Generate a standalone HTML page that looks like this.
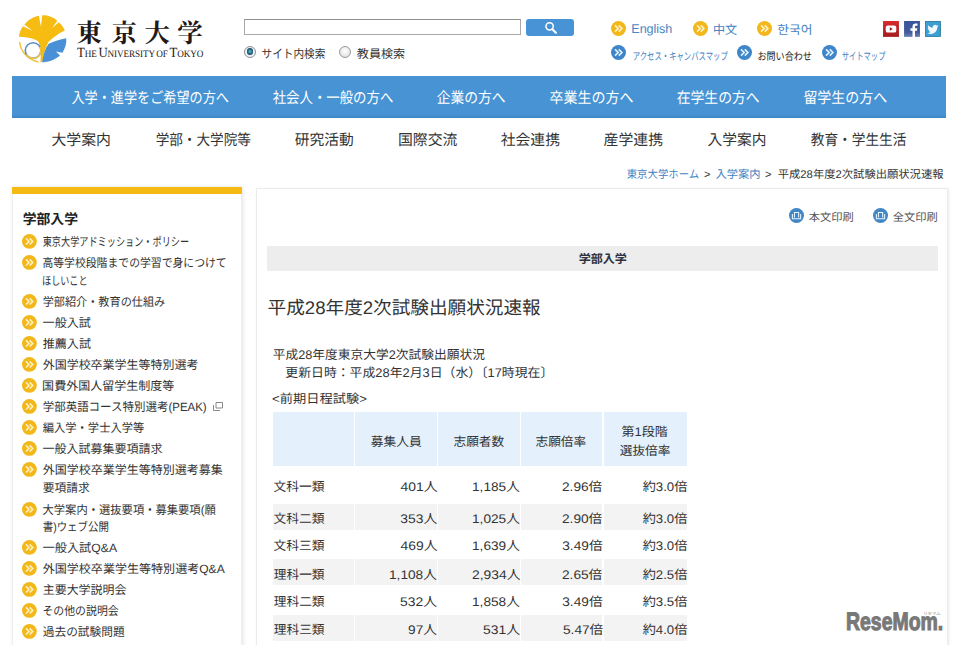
<!DOCTYPE html>
<html lang="ja">
<head>
<meta charset="utf-8">
<title>平成28年度2次試験出願状況速報 | 東京大学</title>
<style>
html,body{margin:0;padding:0;background:#fff}
body{position:relative;width:956px;height:645px;overflow:hidden;text-rendering:geometricPrecision;font-family:"Liberation Sans",sans-serif;color:#333}
ul,ol,li,h1,h2,p,form,table,thead,tbody,tr,th,td{margin:0;padding:0;list-style:none;font-weight:normal;border:0}
a{color:inherit;text-decoration:none}
svg.t,svg.ic{position:absolute;overflow:visible}
svg.t{color:#333;fill:currentColor;stroke:none}
svg.t text{font-family:"Liberation Sans","Noto Sans CJK JP",sans-serif;fill:currentColor;stroke:none}
svg.t text.b{font-weight:bold}
svg.t text.sc{font-family:"Liberation Sans","Noto Sans CJK SC",sans-serif}
svg.t text.kr{font-family:"Liberation Sans","Noto Sans CJK KR","NanumGothic",sans-serif}
.logo .jp svg.t text{font-family:"Liberation Serif","Noto Serif CJK SC",serif;font-weight:bold}
#hd{position:absolute;left:0;top:0;width:956px;height:76px}
.logo .en{position:absolute;left:76.8px;top:46.9px;white-space:nowrap;transform-origin:0 0;transform:scaleX(.915);font-family:"Liberation Serif",serif;font-size:10px;line-height:14px;color:#231815;letter-spacing:-0.12px;word-spacing:-0.5px}
.logo .en b{font-weight:normal;font-size:14px}
.search .q{position:absolute;left:244px;top:19px;width:277px;height:16px;box-sizing:border-box;border:1px solid #a9a9a9;border-top-color:#8f8f8f;background:#fff;padding:0;margin:0;border-radius:0;outline:0}
.search .go{position:absolute;left:526px;top:19.2px;width:47.8px;height:16.5px;box-sizing:border-box;border:0;border-radius:3px;background:#4893d6;padding:0;margin:0}
.search .go svg{position:absolute;left:17.6px;top:1.4px}
.rd{position:absolute;width:12px;height:12px}
.radio{position:absolute;left:0;top:0;width:12px;height:12px;box-sizing:border-box;border:1px solid #9a9a9a;border-radius:50%;background:radial-gradient(circle at 50% 40%,#fff 0,#e8e8e8 60%,#d4d4d4 100%)}
.radio.on:after{content:"";position:absolute;left:1.7px;top:1.7px;width:6.6px;height:6.6px;border-radius:50%;background:radial-gradient(circle at 50% 50%,#6fc6d6 0,#2f7f98 35%,#163f58 75%)}
.radio.on{border-color:#8a909a;background:#eef3f8}
.eng{position:absolute;left:631.3px;top:21.3px;font-size:12.6px;line-height:16px;color:#4a86c2;letter-spacing:-0.05px}
#n1{position:absolute;left:12px;top:76px;width:934px;height:41.8px;background:#4793d4;box-shadow:inset 0 -3px 2px -1px rgba(0,40,90,.10)}
#n2{position:absolute;left:0;top:118px;width:956px;height:42px}
.crumb{position:absolute;left:0;top:0}
#side{position:absolute;left:12px;top:187px;width:230px;height:470px;background:#fff;box-shadow:inset 0 0 0 1px #eee,1px 0 4px rgba(0,0,0,.11)}
#side:before{content:"";position:absolute;left:0;top:0;width:230px;height:6.8px;background:#f5bb12}
#main{position:absolute;left:256px;top:188px;width:691.6px;height:470px;background:#fff;box-shadow:inset 0 0 0 1px #ebebeb,1px 1px 3px rgba(0,0,0,.09)}
#main ul.print,#main p,#main h1{position:absolute;left:0;top:0}
#main p.cat{left:11px;top:57.5px;width:671px;height:25.1px;background:#ededed}
.tb{position:absolute;left:16.7px;top:224px;display:block}
.tb thead,.tb tbody{display:block}
.tb tr{display:block;position:absolute;left:0;width:414px}
.tb thead tr{top:0;height:53.7px}
.tb th,.tb td{display:block;position:absolute;top:0;height:100%}
.tb thead th{background:#e4f0fc}
.tb tr.g th,.tb tr.g td{background:#f3f3f3}
.wm{position:absolute;left:845.5px;top:608.3px;width:100px;height:28px;color:#787878;font-weight:bold;font-size:25.2px;line-height:28px;white-space:nowrap;-webkit-text-stroke:1.1px #787878}
.wm span{display:inline-block;transform-origin:0 50%;transform:scaleX(.772);letter-spacing:0}
.wm svg.t text{font-weight:normal}
</style>
</head>
<body>
<header id="hd">
<a class="logo" href="#">
<svg class="ic" style="left:10px;top:8px" width="70" height="62" viewBox="0 0 728 645" aria-hidden="true">
<path d="M93 300C97 255 112 220 135 190L235 240 150 172C185 125 240 92 300 80L322 195 335 76C390 72 445 92 492 132L438 208 507 147C540 175 560 205 570 235 500 270 440 310 400 355 370 410 350 480 338 562L316 564C325 470 322 400 295 350 262 322 190 304 93 300z" fill="#f6bc12"/>
<path d="M99 352A245 245 0 0 0 298 563" fill="none" stroke="#f2c23e" stroke-width="15"/>
<circle cx="240" cy="442" r="81" fill="none" stroke="#5a8fc6" stroke-width="17"/>
<path d="M312 405A81 81 0 0 1 170 483" fill="none" stroke="#f2c23e" stroke-width="17"/>
<path d="M335 566C345 490 365 420 402 372 460 345 520 325 585 315 590 370 575 420 545 465L478 452 520 495C470 540 400 562 335 566z" fill="#4a90d6"/>
</svg>
<span class="jp">
<svg class="t" style="left:76.1px;top:18.74px;color:#231815" width="25.9" height="30.6"><text x="0.4" y="23.46" font-size="25.5">東</text></svg>
<svg class="t" style="left:111px;top:18.74px;color:#231815" width="25" height="30.6"><text x="0.44" y="23.46" font-size="25.5">京</text></svg>
<svg class="t" style="left:143.7px;top:18.74px;color:#231815" width="26.1" height="30.6"><text x="0.39" y="23.46" font-size="25.5">大</text></svg>
<svg class="t" style="left:176.6px;top:18.74px;color:#231815" width="27" height="30.6"><text x="0.31" y="23.46" font-size="25.5">学</text></svg>
</span>
<span class="en"><b>T</b>HE <b>U</b>NIVERSITY OF <b>T</b>OKYO</span>
</a>
<form class="search" action="#">
<input type="text" class="q" aria-label="検索">
<button type="button" class="go" aria-label="検索"><svg width="13.6" height="13.6" viewBox="0 0 16 16"><circle cx="6.6" cy="6.3" r="4.3" fill="none" stroke="#fff" stroke-width="1.9"/><path d="M9.8 9.6 14 13.8" stroke="#fff" stroke-width="2.4" stroke-linecap="round"/></svg></button>
<label class="rd" style="left:244px;top:45.8px"><span class="radio on"></span></label>
<svg class="t" style="left:261px;top:46.52px" width="64.9" height="14.4"><text x="0.55" y="11.04" font-size="12" textLength="63.8" lengthAdjust="spacingAndGlyphs">サイト内検索</text></svg>
<label class="rd" style="left:339px;top:45.7px"><span class="radio"></span></label>
<svg class="t" style="left:356.3px;top:46.52px" width="49.7" height="14.4"><text x="0.82" y="11.04" font-size="12" textLength="48.4" lengthAdjust="spacingAndGlyphs">教員検索</text></svg>
</form>
<ul class="lang">
<li><a href="#"><svg class="ic" style="left:611px;top:21.1px" width="15" height="15" viewBox="0 0 16 16" aria-hidden="true"><circle cx="8" cy="8" r="8" fill="#f3b71a"/><path d="M4.3 4.7 7.6 8 4.3 11.3M8.3 4.7 11.6 8 8.3 11.3" fill="none" stroke="#fff3cc" stroke-width="1.75"/></svg><span class="eng">English</span></a></li>
<li><a href="#"><svg class="ic" style="left:693.1px;top:21.1px" width="15" height="15" viewBox="0 0 16 16" aria-hidden="true"><circle cx="8" cy="8" r="8" fill="#f3b71a"/><path d="M4.3 4.7 7.6 8 4.3 11.3M8.3 4.7 11.6 8 8.3 11.3" fill="none" stroke="#fff3cc" stroke-width="1.75"/></svg><svg class="t" style="left:712.6px;top:22.91px;color:#4482c0" width="24.7" height="14.64"><text class="sc" x="0" y="11.22" font-size="12.2" textLength="24.2" lengthAdjust="spacingAndGlyphs">中文</text></svg></a></li>
<li><a href="#"><svg class="ic" style="left:757.2px;top:21.1px" width="15" height="15" viewBox="0 0 16 16" aria-hidden="true"><circle cx="8" cy="8" r="8" fill="#f3b71a"/><path d="M4.3 4.7 7.6 8 4.3 11.3M8.3 4.7 11.6 8 8.3 11.3" fill="none" stroke="#fff3cc" stroke-width="1.75"/></svg><svg class="t" style="left:776.5px;top:23.11px;color:#4482c0" width="35.7" height="14.64"><text class="kr" x="0.29" y="11.22" font-size="12.2" textLength="35.2" lengthAdjust="spacingAndGlyphs">한국어</text></svg></a></li>
</ul>
<ul class="util">
<li><a href="#"><svg class="ic" style="left:611px;top:44.9px" width="15" height="15" viewBox="0 0 16 16" aria-hidden="true"><circle cx="8" cy="8" r="8" fill="#3f85c9"/><path d="M4.3 4.7 7.6 8 4.3 11.3M8.3 4.7 11.6 8 8.3 11.3" fill="none" stroke="#e3f2ff" stroke-width="1.75"/></svg><svg class="t" style="left:631.6px;top:49.98px;color:#4482c0" width="96.2" height="12.72"><text x="0.74" y="9.75" font-size="10.6" textLength="95" lengthAdjust="spacingAndGlyphs">アクセス・キャンパスマップ</text></svg></a></li>
<li><a href="#"><svg class="ic" style="left:736.8px;top:44.9px" width="15" height="15" viewBox="0 0 16 16" aria-hidden="true"><circle cx="8" cy="8" r="8" fill="#3f85c9"/><path d="M4.3 4.7 7.6 8 4.3 11.3M8.3 4.7 11.6 8 8.3 11.3" fill="none" stroke="#e3f2ff" stroke-width="1.75"/></svg><svg class="t" style="left:756.8px;top:49.98px;color:#1a1a1a" width="55.4" height="12.72"><text x="0.42" y="9.75" font-size="10.6" textLength="54.5" lengthAdjust="spacingAndGlyphs">お問い合わせ</text></svg></a></li>
<li><a href="#"><svg class="ic" style="left:821.9px;top:44.9px" width="15" height="15" viewBox="0 0 16 16" aria-hidden="true"><circle cx="8" cy="8" r="8" fill="#3f85c9"/><path d="M4.3 4.7 7.6 8 4.3 11.3M8.3 4.7 11.6 8 8.3 11.3" fill="none" stroke="#e3f2ff" stroke-width="1.75"/></svg><svg class="t" style="left:841px;top:49.98px;color:#4482c0" width="44.8" height="12.72"><text x="0.66" y="9.75" font-size="10.6" textLength="43.8" lengthAdjust="spacingAndGlyphs">サイトマップ</text></svg></a></li>
</ul>
<ul class="sns">
<li><a href="#" aria-label="YouTube"><svg class="ic" style="left:882.9px;top:20.8px" width="16" height="15.9" viewBox="0 0 16 16"><defs><linearGradient id="yg" x1="0" y1="0" x2="0" y2="1"><stop offset="0" stop-color="#d92a2c"/><stop offset="1" stop-color="#a31c1f"/></linearGradient></defs><rect width="16" height="16" fill="url(#yg)"/><rect x="2.7" y="4.5" width="10.6" height="7.2" rx="2" fill="#fff"/><path d="M6.800 6.400v3.400l3-1.700z" fill="#8e1b1d"/></svg></a></li>
<li><a href="#" aria-label="Facebook"><svg class="ic" style="left:904px;top:20.8px" width="16" height="15.9" viewBox="0 0 16 16"><defs><linearGradient id="fg" x1="0" y1="0" x2="0" y2="1"><stop offset="0" stop-color="#3a559c"/><stop offset=".7" stop-color="#40599b"/><stop offset="1" stop-color="#6b82b3"/></linearGradient></defs><rect width="16" height="16" fill="url(#fg)"/><path d="M11 16V9.800h2l.3-2.400H11V5.900c0-.7.200-1.200 1.200-1.200h1.300V2.600c-.2 0-1-.1-1.900-.1-1.900 0-3.100 1.100-3.100 3.200v1.700H6.400v2.400h2.100V16z" fill="#fff"/></svg></a></li>
<li><a href="#" aria-label="Twitter"><svg class="ic" style="left:924.9px;top:20.8px" width="16" height="15.9" viewBox="0 0 16 16"><rect x=".4" y=".4" width="15.200" height="15.200" fill="#3c9fd4" stroke="#22759c" stroke-width=".8"/><path d="M13.400 4.900c-.4.200-.9.300-1.300.4.500-.3.800-.7 1-1.300-.4.300-.9.500-1.500.6a2.300 2.300 0 0 0-3.900 2.100C5.900 6.600 4.200 5.700 3.100 4.300c-.6 1-.3 2.400.700 3.100-.4 0-.7-.1-1-.3 0 1.100.8 2.100 1.800 2.300-.3.100-.7.100-1 0 .3.900 1.100 1.600 2.100 1.600-1 .8-2.200 1.100-3.400 1 1 .7 2.300 1 3.500 1 4.300 0 6.700-3.600 6.500-6.900.4-.3.800-.7 1.100-1.200z" fill="#f4fbff"/></svg></a></li>
</ul>
</header>
<nav id="n1"><ul>
<li><a href="#"><svg class="t" style="left:59.3px;top:12.79px;color:#fff" width="158.7" height="18.24"><text x="0.42" y="13.98" font-size="15.2" textLength="157.5" lengthAdjust="spacingAndGlyphs">入学・進学をご希望の方へ</text></svg></a></li>
<li><a href="#"><svg class="t" style="left:260.2px;top:12.79px;color:#fff" width="122" height="18.24"><text x="0.73" y="13.98" font-size="15.2" textLength="120.6" lengthAdjust="spacingAndGlyphs">社会人・一般の方へ</text></svg></a></li>
<li><a href="#"><svg class="t" style="left:424.1px;top:12.79px;color:#fff" width="70.1" height="18.24"><text x="0.74" y="13.98" font-size="15.2" textLength="68.8" lengthAdjust="spacingAndGlyphs">企業の方へ</text></svg></a></li>
<li><a href="#"><svg class="t" style="left:536.6px;top:12.79px;color:#fff" width="85.1" height="18.24"><text x="0.62" y="13.98" font-size="15.2" textLength="83.8" lengthAdjust="spacingAndGlyphs">卒業生の方へ</text></svg></a></li>
<li><a href="#"><svg class="t" style="left:664.2px;top:12.79px;color:#fff" width="84.3" height="18.24"><text x="0.71" y="13.98" font-size="15.2" textLength="83" lengthAdjust="spacingAndGlyphs">在学生の方へ</text></svg></a></li>
<li><a href="#"><svg class="t" style="left:790.9px;top:12.79px;color:#fff" width="84.8" height="18.24"><text x="0.39" y="13.98" font-size="15.2" textLength="83.8" lengthAdjust="spacingAndGlyphs">留学生の方へ</text></svg></a></li>
</ul></nav>
<nav id="n2"><ul>
<li><a href="#"><svg class="t" style="left:51.2px;top:12.9px" width="60.3" height="18"><text x="0.4" y="13.8" font-size="15" textLength="59.5" lengthAdjust="spacingAndGlyphs">大学案内</text></svg></a></li>
<li><a href="#"><svg class="t" style="left:154.7px;top:12.9px" width="96.4" height="18"><text x="0.63" y="13.8" font-size="15" textLength="95.3" lengthAdjust="spacingAndGlyphs">学部・大学院等</text></svg></a></li>
<li><a href="#"><svg class="t" style="left:294.3px;top:12.9px" width="60.2" height="18"><text x="0.83" y="13.8" font-size="15" textLength="59" lengthAdjust="spacingAndGlyphs">研究活動</text></svg></a></li>
<li><a href="#"><svg class="t" style="left:397.7px;top:12.9px" width="60" height="18"><text x="0" y="13.8" font-size="15" textLength="59.5" lengthAdjust="spacingAndGlyphs">国際交流</text></svg></a></li>
<li><a href="#"><svg class="t" style="left:500.4px;top:12.9px" width="60.5" height="18"><text x="0.73" y="13.8" font-size="15" textLength="59.3" lengthAdjust="spacingAndGlyphs">社会連携</text></svg></a></li>
<li><a href="#"><svg class="t" style="left:603.4px;top:12.9px" width="60.5" height="18"><text x="0.62" y="13.8" font-size="15" textLength="59.4" lengthAdjust="spacingAndGlyphs">産学連携</text></svg></a></li>
<li><a href="#"><svg class="t" style="left:707px;top:12.9px" width="59.6" height="18"><text x="0.43" y="13.8" font-size="15" textLength="59" lengthAdjust="spacingAndGlyphs">入学案内</text></svg></a></li>
<li><a href="#"><svg class="t" style="left:810.1px;top:12.9px" width="97.1" height="18"><text x="0.77" y="13.8" font-size="15" textLength="95.7" lengthAdjust="spacingAndGlyphs">教育・学生生活</text></svg></a></li>
</ul></nav>
<ol class="crumb">
<li><a href="#"><svg class="t" style="left:626.1px;top:168.01px;color:#4482c0" width="73.7" height="13.32"><text x="0.73" y="10.21" font-size="11.1" textLength="72.5" lengthAdjust="spacingAndGlyphs">東京大学ホーム</text></svg></a></li>
<li><svg class="t" style="left:702.8px;top:168.01px" width="8.500" height="13.32"><text x="1" y="10.21" font-size="11.1">&gt;</text></svg><a href="#"><svg class="t" style="left:715px;top:168.01px;color:#4482c0" width="45.6" height="13.32"><text x="0.57" y="10.21" font-size="11.1" textLength="45" lengthAdjust="spacingAndGlyphs">入学案内</text></svg></a></li>
<li><svg class="t" style="left:764.2px;top:168.01px" width="8.500" height="13.32"><text x="1" y="10.21" font-size="11.1">&gt;</text></svg><svg class="t" style="left:776.8px;top:168.01px" width="167" height="13.32"><text x="0.72" y="10.21" font-size="11.1" textLength="165.8" lengthAdjust="spacingAndGlyphs">平成28年度2次試験出願状況速報</text></svg></li>
</ol>
<aside id="side">
<h2><svg class="t" style="left:9.8px;top:24.44px;color:#222" width="56.6" height="16.8"><text class="b" x="0.66" y="12.88" font-size="14" textLength="55.3" lengthAdjust="spacingAndGlyphs">学部入学</text></svg></h2>
<ul>
<li><a href="#"><svg class="ic" style="left:10px;top:47.1px" width="14.8" height="14.8" viewBox="0 0 16 16" aria-hidden="true"><circle cx="8" cy="8" r="8" fill="#f2b819"/><path d="M4.3 4.7 7.6 8 4.3 11.3M8.3 4.7 11.6 8 8.3 11.3" fill="none" stroke="#fff1c2" stroke-width="1.7"/></svg><svg class="t" style="left:29.6px;top:48.02px" width="147.7" height="14.4"><text x="0.71" y="11.04" font-size="12" textLength="146.4" lengthAdjust="spacingAndGlyphs">東京大学アドミッション・ポリシー</text></svg></a></li>
<li><a href="#"><svg class="ic" style="left:10px;top:68.2px" width="14.8" height="14.8" viewBox="0 0 16 16" aria-hidden="true"><circle cx="8" cy="8" r="8" fill="#f2b819"/><path d="M4.3 4.7 7.6 8 4.3 11.3M8.3 4.7 11.6 8 8.3 11.3" fill="none" stroke="#fff1c2" stroke-width="1.7"/></svg><svg class="t" style="left:29.6px;top:69.32px" width="185.3" height="14.4"><text x="0.41" y="11.04" font-size="12" textLength="184.3" lengthAdjust="spacingAndGlyphs">高等学校段階までの学習で身につけて</text></svg><svg class="t" style="left:29.6px;top:87.32px" width="46" height="14.4"><text x="0.05" y="11.04" font-size="12" textLength="45.5" lengthAdjust="spacingAndGlyphs">ほしいこと</text></svg></a></li>
<li><a href="#"><svg class="ic" style="left:10px;top:107px" width="14.8" height="14.8" viewBox="0 0 16 16" aria-hidden="true"><circle cx="8" cy="8" r="8" fill="#f2b819"/><path d="M4.3 4.7 7.6 8 4.3 11.3M8.3 4.7 11.6 8 8.3 11.3" fill="none" stroke="#fff1c2" stroke-width="1.7"/></svg><svg class="t" style="left:29.6px;top:107.92px" width="123.8" height="14.4"><text x="0.7" y="11.04" font-size="12" textLength="122.5" lengthAdjust="spacingAndGlyphs">学部紹介・教育の仕組み</text></svg></a></li>
<li><a href="#"><svg class="ic" style="left:10px;top:128.3px" width="14.8" height="14.8" viewBox="0 0 16 16" aria-hidden="true"><circle cx="8" cy="8" r="8" fill="#f2b819"/><path d="M4.3 4.7 7.6 8 4.3 11.3M8.3 4.7 11.6 8 8.3 11.3" fill="none" stroke="#fff1c2" stroke-width="1.7"/></svg><svg class="t" style="left:29.6px;top:129.32px" width="49.7" height="14.4"><text x="0.54" y="11.04" font-size="12" textLength="48.4" lengthAdjust="spacingAndGlyphs">一般入試</text></svg></a></li>
<li><a href="#"><svg class="ic" style="left:10px;top:149.1px" width="14.8" height="14.8" viewBox="0 0 16 16" aria-hidden="true"><circle cx="8" cy="8" r="8" fill="#f2b819"/><path d="M4.3 4.7 7.6 8 4.3 11.3M8.3 4.7 11.6 8 8.3 11.3" fill="none" stroke="#fff1c2" stroke-width="1.7"/></svg><svg class="t" style="left:29.6px;top:150.02px" width="49.7" height="14.4"><text x="0.76" y="11.04" font-size="12" textLength="48.2" lengthAdjust="spacingAndGlyphs">推薦入試</text></svg></a></li>
<li><a href="#"><svg class="ic" style="left:10px;top:169.9px" width="14.8" height="14.8" viewBox="0 0 16 16" aria-hidden="true"><circle cx="8" cy="8" r="8" fill="#f2b819"/><path d="M4.3 4.7 7.6 8 4.3 11.3M8.3 4.7 11.6 8 8.3 11.3" fill="none" stroke="#fff1c2" stroke-width="1.7"/></svg><svg class="t" style="left:29.6px;top:170.82px" width="157.2" height="14.4"><text x="0.7" y="11.04" font-size="12" textLength="155.8" lengthAdjust="spacingAndGlyphs">外国学校卒業学生等特別選考</text></svg></a></li>
<li><a href="#"><svg class="ic" style="left:10px;top:191.1px" width="14.8" height="14.8" viewBox="0 0 16 16" aria-hidden="true"><circle cx="8" cy="8" r="8" fill="#f2b819"/><path d="M4.3 4.7 7.6 8 4.3 11.3M8.3 4.7 11.6 8 8.3 11.3" fill="none" stroke="#fff1c2" stroke-width="1.7"/></svg><svg class="t" style="left:29.6px;top:192.12px" width="133.1" height="14.4"><text x="0.12" y="11.04" font-size="12" textLength="132.3" lengthAdjust="spacingAndGlyphs">国費外国人留学生制度等</text></svg></a></li>
<li><a href="#"><svg class="ic" style="left:10px;top:212px" width="14.8" height="14.8" viewBox="0 0 16 16" aria-hidden="true"><circle cx="8" cy="8" r="8" fill="#f2b819"/><path d="M4.3 4.7 7.6 8 4.3 11.3M8.3 4.7 11.6 8 8.3 11.3" fill="none" stroke="#fff1c2" stroke-width="1.7"/></svg><svg class="t" style="left:29.6px;top:212.92px" width="165.2" height="14.4"><text x="0.7" y="11.04" font-size="12" textLength="164" lengthAdjust="spacingAndGlyphs">学部英語コース特別選考(PEAK)</text></svg><svg class="ic" style="left:200.6px;top:215.2px" width="10" height="9" viewBox="0 0 10 9" aria-hidden="true"><path d="M3 .5h6.500v5.500H3zM.5 3v5.500h6.500" fill="none" stroke="#888" stroke-width="1"/></svg></a></li>
<li><a href="#"><svg class="ic" style="left:10px;top:232.9px" width="14.8" height="14.8" viewBox="0 0 16 16" aria-hidden="true"><circle cx="8" cy="8" r="8" fill="#f2b819"/><path d="M4.3 4.7 7.6 8 4.3 11.3M8.3 4.7 11.6 8 8.3 11.3" fill="none" stroke="#fff1c2" stroke-width="1.7"/></svg><svg class="t" style="left:29.6px;top:233.82px" width="103" height="14.4"><text x="0.77" y="11.04" font-size="12" textLength="101.5" lengthAdjust="spacingAndGlyphs">編入学・学士入学等</text></svg></a></li>
<li><a href="#"><svg class="ic" style="left:10px;top:253.9px" width="14.8" height="14.8" viewBox="0 0 16 16" aria-hidden="true"><circle cx="8" cy="8" r="8" fill="#f2b819"/><path d="M4.3 4.7 7.6 8 4.3 11.3M8.3 4.7 11.6 8 8.3 11.3" fill="none" stroke="#fff1c2" stroke-width="1.7"/></svg><svg class="t" style="left:29.6px;top:254.82px" width="121.3" height="14.4"><text x="0.54" y="11.04" font-size="12" textLength="120.1" lengthAdjust="spacingAndGlyphs">一般入試募集要項請求</text></svg></a></li>
<li><a href="#"><svg class="ic" style="left:10px;top:274.8px" width="14.8" height="14.8" viewBox="0 0 16 16" aria-hidden="true"><circle cx="8" cy="8" r="8" fill="#f2b819"/><path d="M4.3 4.7 7.6 8 4.3 11.3M8.3 4.7 11.6 8 8.3 11.3" fill="none" stroke="#fff1c2" stroke-width="1.7"/></svg><svg class="t" style="left:29.6px;top:275.72px" width="181.6" height="14.4"><text x="0.7" y="11.04" font-size="12" textLength="180.1" lengthAdjust="spacingAndGlyphs">外国学校卒業学生等特別選考募集</text></svg><svg class="t" style="left:29.6px;top:294.02px" width="48.4" height="14.4"><text x="0.71" y="11.04" font-size="12" textLength="47" lengthAdjust="spacingAndGlyphs">要項請求</text></svg></a></li>
<li><a href="#"><svg class="ic" style="left:10px;top:314.6px" width="14.8" height="14.8" viewBox="0 0 16 16" aria-hidden="true"><circle cx="8" cy="8" r="8" fill="#f2b819"/><path d="M4.3 4.7 7.6 8 4.3 11.3M8.3 4.7 11.6 8 8.3 11.3" fill="none" stroke="#fff1c2" stroke-width="1.7"/></svg><svg class="t" style="left:29.6px;top:315.72px" width="174.4" height="14.4"><text x="0.52" y="11.04" font-size="12" textLength="173.2" lengthAdjust="spacingAndGlyphs">大学案内・選抜要項・募集要項(願</text></svg><svg class="t" style="left:29.6px;top:333.42px" width="67.4" height="14.4"><text x="0.7" y="11.04" font-size="12" textLength="66.3" lengthAdjust="spacingAndGlyphs">書)ウェブ公開</text></svg></a></li>
<li><a href="#"><svg class="ic" style="left:10px;top:353px" width="14.8" height="14.8" viewBox="0 0 16 16" aria-hidden="true"><circle cx="8" cy="8" r="8" fill="#f2b819"/><path d="M4.3 4.7 7.6 8 4.3 11.3M8.3 4.7 11.6 8 8.3 11.3" fill="none" stroke="#fff1c2" stroke-width="1.7"/></svg><svg class="t" style="left:29.6px;top:353.92px" width="75.6" height="14.4"><text x="0.54" y="11.04" font-size="12" textLength="74.5" lengthAdjust="spacingAndGlyphs">一般入試Q&amp;A</text></svg></a></li>
<li><a href="#"><svg class="ic" style="left:10px;top:374.1px" width="14.8" height="14.8" viewBox="0 0 16 16" aria-hidden="true"><circle cx="8" cy="8" r="8" fill="#f2b819"/><path d="M4.3 4.7 7.6 8 4.3 11.3M8.3 4.7 11.6 8 8.3 11.3" fill="none" stroke="#fff1c2" stroke-width="1.7"/></svg><svg class="t" style="left:29.6px;top:375.02px" width="183.3" height="14.4"><text x="0.7" y="11.04" font-size="12" textLength="182" lengthAdjust="spacingAndGlyphs">外国学校卒業学生等特別選考Q&amp;A</text></svg></a></li>
<li><a href="#"><svg class="ic" style="left:10px;top:395.2px" width="14.8" height="14.8" viewBox="0 0 16 16" aria-hidden="true"><circle cx="8" cy="8" r="8" fill="#f2b819"/><path d="M4.3 4.7 7.6 8 4.3 11.3M8.3 4.7 11.6 8 8.3 11.3" fill="none" stroke="#fff1c2" stroke-width="1.7"/></svg><svg class="t" style="left:29.6px;top:396.12px" width="85.3" height="14.4"><text x="0.7" y="11.04" font-size="12" textLength="83.8" lengthAdjust="spacingAndGlyphs">主要大学説明会</text></svg></a></li>
<li><a href="#"><svg class="ic" style="left:10px;top:416.3px" width="14.8" height="14.8" viewBox="0 0 16 16" aria-hidden="true"><circle cx="8" cy="8" r="8" fill="#f2b819"/><path d="M4.3 4.7 7.6 8 4.3 11.3M8.3 4.7 11.6 8 8.3 11.3" fill="none" stroke="#fff1c2" stroke-width="1.7"/></svg><svg class="t" style="left:29.6px;top:417.22px" width="77.4" height="14.4"><text x="0.47" y="11.04" font-size="12" textLength="76.2" lengthAdjust="spacingAndGlyphs">その他の説明会</text></svg></a></li>
<li><a href="#"><svg class="ic" style="left:10px;top:437.3px" width="14.8" height="14.8" viewBox="0 0 16 16" aria-hidden="true"><circle cx="8" cy="8" r="8" fill="#f2b819"/><path d="M4.3 4.7 7.6 8 4.3 11.3M8.3 4.7 11.6 8 8.3 11.3" fill="none" stroke="#fff1c2" stroke-width="1.7"/></svg><svg class="t" style="left:29.6px;top:438.22px" width="83.5" height="14.4"><text x="0.74" y="11.04" font-size="12" textLength="82" lengthAdjust="spacingAndGlyphs">過去の試験問題</text></svg></a></li>
</ul></aside>
<main id="main">
<ul class="print">
<li><a href="#"><svg class="ic" style="left:533px;top:20px" width="15" height="15" viewBox="0 0 16 16" aria-hidden="true"><circle cx="8" cy="8" r="8" fill="#4286c6"/><path d="M3.6 6.500V11.500H12.400V6.500M5.800 10V4.900H10.300V10" fill="none" stroke="#e4f6ff" stroke-width="1.1"/></svg><svg class="t" style="left:551.6px;top:23.01px;color:#555" width="46.1" height="13.32"><text x="0.71" y="10.21" font-size="11.1" textLength="45.1" lengthAdjust="spacingAndGlyphs">本文印刷</text></svg></a></li>
<li><a href="#"><svg class="ic" style="left:616.9px;top:20px" width="15" height="15" viewBox="0 0 16 16" aria-hidden="true"><circle cx="8" cy="8" r="8" fill="#4286c6"/><path d="M3.6 6.500V11.500H12.400V6.500M5.800 10V4.900H10.300V10" fill="none" stroke="#e4f6ff" stroke-width="1.1"/></svg><svg class="t" style="left:636.3px;top:23.01px;color:#555" width="46" height="13.32"><text x="0.79" y="10.21" font-size="11.1" textLength="44.9" lengthAdjust="spacingAndGlyphs">全文印刷</text></svg></a></li>
</ul>
<p class="cat"><svg class="t" style="left:310.8px;top:6.52px;color:#2d323c" width="49.6" height="14.4"><text class="b" x="0.7" y="11.04" font-size="12" textLength="48.2" lengthAdjust="spacingAndGlyphs">学部入学</text></svg></p>
<h1><svg class="t" style="left:11.1px;top:108.97px" width="274.5" height="21.84"><text x="0.55" y="16.74" font-size="18.2" textLength="273.2" lengthAdjust="spacingAndGlyphs">平成28年度2次試験出願状況速報</text></svg></h1>
<p><svg class="t" style="left:16.1px;top:158.95px" width="213.6" height="15"><text x="0.69" y="11.5" font-size="12.5" textLength="212.3" lengthAdjust="spacingAndGlyphs">平成28年度東京大学2次試験出願状況</text></svg></p>
<p><svg class="t" style="left:28.6px;top:177.05px" width="261.5" height="15"><text x="0.3" y="11.5" font-size="12.5" textLength="268" lengthAdjust="spacingAndGlyphs">更新日時：平成28年2月3日（水）〔17時現在〕</text></svg></p>
<p><svg class="t" style="left:16.1px;top:203.15px" width="95.6" height="15"><text x="0.09" y="11.5" font-size="12.5" textLength="94.8" lengthAdjust="spacingAndGlyphs">&lt;前期日程試験&gt;</text></svg></p>
<table class="tb"><thead><tr>
<th style="left:0px;width:81.1px"></th>
<th style="left:82.8px;width:81.2px"><svg class="t" style="left:14.1px;top:21.95px" width="52.4" height="15"><text x="0.76" y="11.5" font-size="12.5" textLength="51" lengthAdjust="spacingAndGlyphs">募集人員</text></svg></th>
<th style="left:165.6px;width:81.3px"><svg class="t" style="left:14.7px;top:21.95px" width="51.8" height="15"><text x="0.58" y="11.5" font-size="12.5" textLength="50.5" lengthAdjust="spacingAndGlyphs">志願者数</text></svg></th>
<th style="left:248.4px;width:81.1px"><svg class="t" style="left:14.2px;top:21.95px" width="51.8" height="15"><text x="0.58" y="11.5" font-size="12.5" textLength="50.5" lengthAdjust="spacingAndGlyphs">志願倍率</text></svg></th>
<th style="left:331.1px;width:83.3px"><svg class="t" style="left:17.1px;top:11.55px" width="47.4" height="15"><text x="0.64" y="11.5" font-size="12.5" textLength="46.1" lengthAdjust="spacingAndGlyphs">第1段階</text></svg><svg class="t" style="left:15.1px;top:31.15px" width="52.2" height="15"><text x="0.73" y="11.5" font-size="12.5" textLength="50.8" lengthAdjust="spacingAndGlyphs">選抜倍率</text></svg></th>
</tr></thead><tbody>
<tr style="top:55.7px;height:33.9px">
<th style="left:0;width:81.1px"><svg class="t" style="left:0px;top:11.45px" width="52.1" height="15"><text x="0.55" y="11.5" font-size="12.5" textLength="50.9" lengthAdjust="spacingAndGlyphs">文科一類</text></svg></th>
<td style="left:82.8px;width:81.2px"><svg class="t" style="left:44.24px;top:11.45px" width="38.26" height="15"><text x="0.59" y="11.5" font-size="12.5" textLength="37" lengthAdjust="spacingAndGlyphs">401人</text></svg></td>
<td style="left:165.6px;width:81.3px"><svg class="t" style="left:34.1px;top:11.45px" width="48.5" height="15"><text x="0" y="11.5" font-size="12.5" textLength="47.8" lengthAdjust="spacingAndGlyphs">1,185人</text></svg></td>
<td style="left:248.4px;width:81.1px"><svg class="t" style="left:41.42px;top:11.45px" width="40.98" height="15"><text x="0" y="11.5" font-size="12.5" textLength="40.3" lengthAdjust="spacingAndGlyphs">2.96倍</text></svg></td>
<td style="left:331.1px;width:83.3px"><svg class="t" style="left:38.57px;top:11.45px" width="46.03" height="15"><text x="0.68" y="11.5" font-size="12.5" textLength="44.7" lengthAdjust="spacingAndGlyphs">約3.0倍</text></svg></td>
</tr>
<tr class="g" style="top:91.6px;height:26px">
<th style="left:0;width:81.1px"><svg class="t" style="left:0px;top:6.95px" width="52.1" height="15"><text x="0.55" y="11.5" font-size="12.5" textLength="50.9" lengthAdjust="spacingAndGlyphs">文科二類</text></svg></th>
<td style="left:82.8px;width:81.2px"><svg class="t" style="left:44.55px;top:6.95px" width="37.95" height="15"><text x="0.28" y="11.5" font-size="12.5" textLength="37" lengthAdjust="spacingAndGlyphs">353人</text></svg></td>
<td style="left:165.6px;width:81.3px"><svg class="t" style="left:34.1px;top:6.95px" width="48.5" height="15"><text x="0" y="11.5" font-size="12.5" textLength="47.8" lengthAdjust="spacingAndGlyphs">1,025人</text></svg></td>
<td style="left:248.4px;width:81.1px"><svg class="t" style="left:41.42px;top:6.95px" width="40.98" height="15"><text x="0" y="11.5" font-size="12.5" textLength="40.3" lengthAdjust="spacingAndGlyphs">2.90倍</text></svg></td>
<td style="left:331.1px;width:83.3px"><svg class="t" style="left:38.57px;top:6.95px" width="46.03" height="15"><text x="0.68" y="11.5" font-size="12.5" textLength="44.7" lengthAdjust="spacingAndGlyphs">約3.0倍</text></svg></td>
</tr>
<tr style="top:119.5px;height:25.8px">
<th style="left:0;width:81.1px"><svg class="t" style="left:0px;top:6.95px" width="52.1" height="15"><text x="0.55" y="11.5" font-size="12.5" textLength="50.9" lengthAdjust="spacingAndGlyphs">文科三類</text></svg></th>
<td style="left:82.8px;width:81.2px"><svg class="t" style="left:44.24px;top:6.95px" width="38.26" height="15"><text x="0.59" y="11.5" font-size="12.5" textLength="37" lengthAdjust="spacingAndGlyphs">469人</text></svg></td>
<td style="left:165.6px;width:81.3px"><svg class="t" style="left:34.1px;top:6.95px" width="48.5" height="15"><text x="0" y="11.5" font-size="12.5" textLength="47.8" lengthAdjust="spacingAndGlyphs">1,639人</text></svg></td>
<td style="left:248.4px;width:81.1px"><svg class="t" style="left:41.09px;top:6.95px" width="41.31" height="15"><text x="0.28" y="11.5" font-size="12.5" textLength="40.3" lengthAdjust="spacingAndGlyphs">3.49倍</text></svg></td>
<td style="left:331.1px;width:83.3px"><svg class="t" style="left:38.57px;top:6.95px" width="46.03" height="15"><text x="0.68" y="11.5" font-size="12.5" textLength="44.7" lengthAdjust="spacingAndGlyphs">約3.0倍</text></svg></td>
</tr>
<tr class="g" style="top:147.2px;height:26.1px">
<th style="left:0;width:81.1px"><svg class="t" style="left:0px;top:7.35px" width="52.1" height="15"><text x="0.8" y="11.5" font-size="12.5" textLength="50.7" lengthAdjust="spacingAndGlyphs">理科一類</text></svg></th>
<td style="left:82.8px;width:81.2px"><svg class="t" style="left:34px;top:7.35px" width="48.5" height="15"><text x="0" y="11.5" font-size="12.5" textLength="47.8" lengthAdjust="spacingAndGlyphs">1,108人</text></svg></td>
<td style="left:165.6px;width:81.3px"><svg class="t" style="left:33.48px;top:7.35px" width="49.12" height="15"><text x="0" y="11.5" font-size="12.5" textLength="48.5" lengthAdjust="spacingAndGlyphs">2,934人</text></svg></td>
<td style="left:248.4px;width:81.1px"><svg class="t" style="left:41.42px;top:7.35px" width="40.98" height="15"><text x="0" y="11.5" font-size="12.5" textLength="40.3" lengthAdjust="spacingAndGlyphs">2.65倍</text></svg></td>
<td style="left:331.1px;width:83.3px"><svg class="t" style="left:38.57px;top:7.35px" width="46.03" height="15"><text x="0.68" y="11.5" font-size="12.5" textLength="44.7" lengthAdjust="spacingAndGlyphs">約2.5倍</text></svg></td>
</tr>
<tr style="top:175.2px;height:25.7px">
<th style="left:0;width:81.1px"><svg class="t" style="left:0px;top:7.15px" width="52.1" height="15"><text x="0.8" y="11.5" font-size="12.5" textLength="50.7" lengthAdjust="spacingAndGlyphs">理科二類</text></svg></th>
<td style="left:82.8px;width:81.2px"><svg class="t" style="left:44.94px;top:7.15px" width="37.56" height="15"><text x="0" y="11.5" font-size="12.5" textLength="37" lengthAdjust="spacingAndGlyphs">532人</text></svg></td>
<td style="left:165.6px;width:81.3px"><svg class="t" style="left:34.1px;top:7.15px" width="48.5" height="15"><text x="0" y="11.5" font-size="12.5" textLength="47.8" lengthAdjust="spacingAndGlyphs">1,858人</text></svg></td>
<td style="left:248.4px;width:81.1px"><svg class="t" style="left:41.09px;top:7.15px" width="41.31" height="15"><text x="0.28" y="11.5" font-size="12.5" textLength="40.3" lengthAdjust="spacingAndGlyphs">3.49倍</text></svg></td>
<td style="left:331.1px;width:83.3px"><svg class="t" style="left:38.57px;top:7.15px" width="46.03" height="15"><text x="0.68" y="11.5" font-size="12.5" textLength="44.7" lengthAdjust="spacingAndGlyphs">約3.5倍</text></svg></td>
</tr>
<tr class="g" style="top:202.8px;height:26.1px">
<th style="left:0;width:81.1px"><svg class="t" style="left:0px;top:7.05px" width="52.1" height="15"><text x="0.8" y="11.5" font-size="12.5" textLength="50.7" lengthAdjust="spacingAndGlyphs">理科三類</text></svg></th>
<td style="left:82.8px;width:81.2px"><svg class="t" style="left:52.94px;top:7.05px" width="29.56" height="15"><text x="0.07" y="11.5" font-size="12.5" textLength="28.8" lengthAdjust="spacingAndGlyphs">97人</text></svg></td>
<td style="left:165.6px;width:81.3px"><svg class="t" style="left:45.04px;top:7.05px" width="37.56" height="15"><text x="0" y="11.5" font-size="12.5" textLength="37" lengthAdjust="spacingAndGlyphs">531人</text></svg></td>
<td style="left:248.4px;width:81.1px"><svg class="t" style="left:41.48px;top:7.05px" width="40.92" height="15"><text x="0" y="11.5" font-size="12.5" textLength="40.3" lengthAdjust="spacingAndGlyphs">5.47倍</text></svg></td>
<td style="left:331.1px;width:83.3px"><svg class="t" style="left:38.57px;top:7.05px" width="46.03" height="15"><text x="0.68" y="11.5" font-size="12.5" textLength="44.7" lengthAdjust="spacingAndGlyphs">約4.0倍</text></svg></td>
</tr>
</tbody></table>
</main>
<div class="wm"><span>ReseMom.</span><svg class="t" style="left:77.5px;top:3.03px;color:#8a8a8a" width="18" height="5.04"><text x="0.46" y="3.86" font-size="4.2" textLength="17.2" lengthAdjust="spacingAndGlyphs">リセマム</text></svg></div>
</body>
</html>
